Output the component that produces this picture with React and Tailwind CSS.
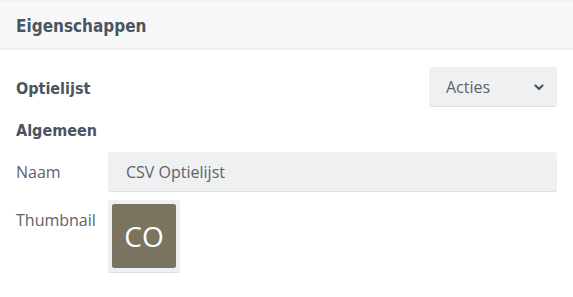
import React from 'react'

const heading = "font-['DejaVu_Sans_Condensed','DejaVu_Sans',sans-serif] font-bold text-[#4b5461]"

function FieldRow({ label, children, alignTop = false }) {
  return (
    <div className={`flex ${alignTop ? 'items-start' : 'items-center'}`}>
      <div className={`w-[92px] shrink-0 text-[16px] text-[#5c636b] ${alignTop ? 'pt-[8px]' : ''}`}>{label}</div>
      <div className="flex-1">{children}</div>
    </div>
  )
}

export default function App() {
  return (
    <div className="w-[573px] h-[297px] bg-white font-['Open_Sans',sans-serif] border-t-2 border-[#f1f1f1]">
      {/* Panel header */}
      <div className="h-[48px] bg-[#f8f8f8] border-b-2 border-[#f0f0f0] px-4 pt-[3px] flex items-center">
        <h2 className={`${heading} text-[17px]`}>Eigenschappen</h2>
      </div>

      <div className="px-4 pt-[17px]">
        <div className="flex items-center justify-between">
          <h3 className={`${heading} text-[16px] pt-[3px]`}>Optielijst</h3>
          <button className="w-[128px] h-[40px] rounded-[3px] bg-[#eff0f2] border-b border-[#dcdee2] flex items-center justify-between pl-[17px] pr-[12px] text-[16px] text-[#5c636b]">
            <span>Acties</span>
            <svg width="12" height="12" viewBox="0 0 12 12" fill="none" stroke="#4b5461" strokeWidth="2.2" strokeLinecap="round" strokeLinejoin="round">
              <path d="M2.5 4.5 6 8l3.5-3.5" />
            </svg>
          </button>
        </div>

        <h3 className={`${heading} text-[16px] mt-[12px] mb-[9px]`}>Algemeen</h3>

        <div className="flex flex-col gap-2">
          <FieldRow label="Naam">
            <div className="h-[40px] rounded-[3px] bg-[#eff0f2] border-b border-[#dcdee2] flex items-center px-[18px] text-[16px] text-[#5c636b]">
              CSV Optielijst
            </div>
          </FieldRow>
          <FieldRow label="Thumbnail" alignTop>
            <div className="w-[72px] h-[73px] p-1 rounded-[3px] bg-[#eff0f2] border-b border-[#dcdee2]">
              <div className="w-[64px] h-[64px] rounded-[2px] bg-[#7a7360] flex items-center justify-center text-white text-[28px]">
                CO
              </div>
            </div>
          </FieldRow>
        </div>
      </div>
    </div>
  )
}
